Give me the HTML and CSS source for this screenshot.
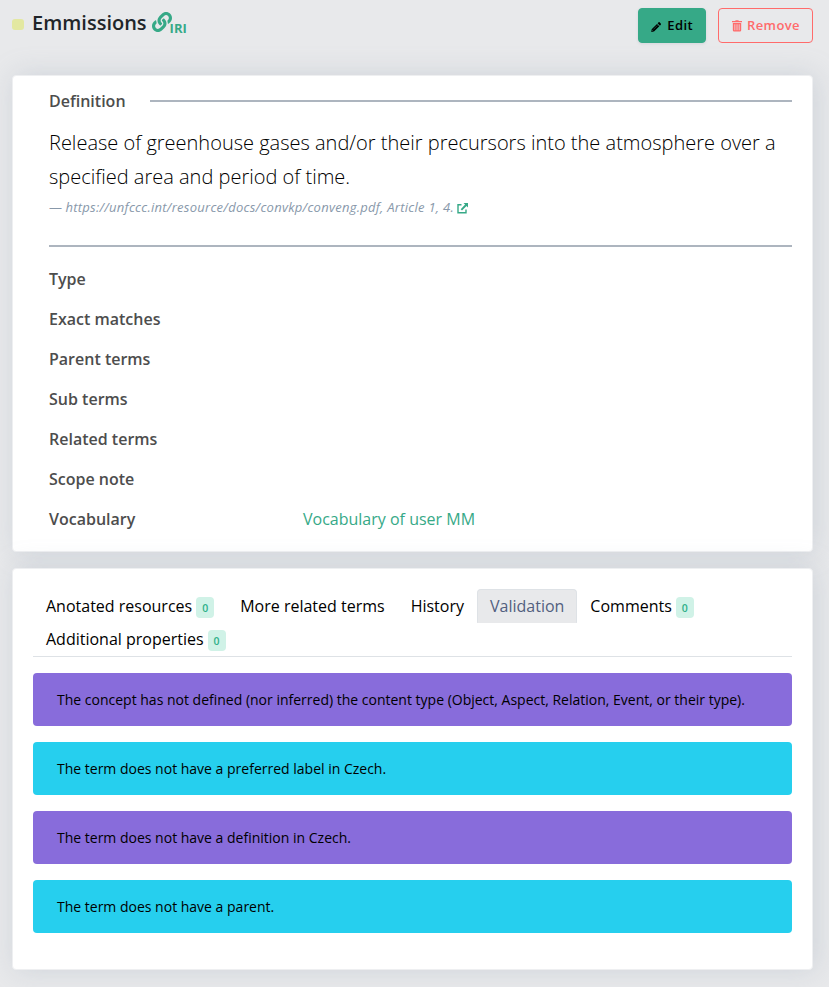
FILE: index.html
```html
<!DOCTYPE html>
<html lang="en">
<head>
<meta charset="utf-8">
<title>Emmissions</title>
<link rel="stylesheet" href="styles.css">
</head>
<body>
<header class="header">
  <span class="dot"></span>
  <h1>Emmissions</h1>
  <a class="iri"><svg class="link-icon" viewBox="0 0 512 512"><path d="M326.612 185.391c59.747 59.809 58.927 155.698.36 214.59-.11.12-.24.25-.36.37l-67.2 67.2c-59.27 59.27-155.699 59.262-214.96 0-59.27-59.26-59.27-155.7 0-214.96l37.106-37.106c9.84-9.84 26.786-3.3 27.294 10.606.648 17.722 3.826 35.527 9.69 52.721 1.986 5.822.567 12.262-3.783 16.612l-13.087 13.087c-28.026 28.026-28.905 73.66-1.155 101.96 28.024 28.579 74.086 28.749 102.325.51l67.2-67.19c28.191-28.191 28.073-73.757 0-101.83-3.701-3.694-7.429-6.564-10.341-8.569a16.037 16.037 0 0 1-6.947-12.606c-.396-10.567 3.348-21.456 11.698-29.806l21.054-21.055c5.521-5.521 14.182-6.199 20.584-1.731a152.482 152.482 0 0 1 20.522 17.197zM467.547 44.449c-59.261-59.262-155.69-59.27-214.96 0l-67.2 67.2c-.12.12-.25.25-.36.37-58.566 58.892-59.387 154.781.36 214.59a152.454 152.454 0 0 0 20.521 17.196c6.402 4.468 15.064 3.789 20.584-1.731l21.054-21.055c8.35-8.35 12.094-19.239 11.698-29.806a16.037 16.037 0 0 0-6.947-12.606c-2.912-2.005-6.64-4.875-10.341-8.569-28.073-28.073-28.191-73.639 0-101.83l67.2-67.19c28.239-28.239 74.3-28.069 102.325.51 27.75 28.3 26.872 73.934-1.155 101.96l-13.087 13.087c-4.35 4.35-5.769 10.79-3.783 16.612 5.864 17.194 9.042 34.999 9.69 52.721.509 13.906 17.454 20.446 27.294 10.606l37.106-37.106c59.271-59.259 59.271-155.699.001-214.959z"/></svg><span>IRI</span></a>
  <div class="actions">
    <button class="btn edit"><svg viewBox="0 0 12 12"><path d="M.3 11.8.8 8.6 7 2.4l2.7 2.7-6.2 6.2zM7.7 1.7 8.9.5q.5-.5 1.1 0l1.6 1.6q.5.6 0 1.1l-1.2 1.2z"/><path d="m2.7 8.9 4.8-4.8M1.2 9.5l1.4 1.4" stroke="#36a987" stroke-width=".5"/></svg><span>Edit</span></button>
    <button class="btn remove"><svg viewBox="0 0 12 14"><path fill-rule="evenodd" d="M0 1h3.7L4.5 0h3l.8 1H12v1.5H0zM1 3.5h10V12q0 1.5-1.5 1.5h-7Q1 13.500 1 12zM3 5v7h.9V5zm2.550 0v7h.9V5zm2.550 0v7H9V5z"/></svg><span>Remove</span></button>
  </div>
</header>
<main>
  <section class="card detail">
    <div class="legend"><h2>Definition</h2><span class="rule"></span></div>
    <p class="definition">Release of greenhouse gases and/or their precursors into the atmosphere over a specified area and period of time.</p>
    <p class="source">— <i>https://unfccc.int/resource/docs/convkp/conveng.pdf, Article 1, 4.</i><svg viewBox="0 0 11 11"><path d="M4.500 1.800H1v8h8V6.500" fill="none" stroke="currentColor" stroke-width="1.400"/><path d="M6.500 0H11v4.500L9.500 3 5 7.500 3.700 6.200l4.400-4.600z"/></svg></p>
    <div class="rule closing"></div>
    <dl class="attributes">
      <dt>Type</dt><dd></dd>
      <dt>Exact matches</dt><dd></dd>
      <dt>Parent terms</dt><dd></dd>
      <dt>Sub terms</dt><dd></dd>
      <dt>Related terms</dt><dd></dd>
      <dt>Scope note</dt><dd></dd>
      <dt>Vocabulary</dt><dd>Vocabulary of user MM</dd>
    </dl>
  </section>
  <section class="card validation">
    <nav class="tabs">
      <a>Anotated resources <span class="badge">0</span></a>
      <a>More related terms</a>
      <a>History</a>
      <a class="active">Validation</a>
      <a>Comments <span class="badge">0</span></a>
      <a>Additional properties <span class="badge">0</span></a>
    </nav>
    <div class="alert purple">The concept has not defined (nor inferred) the content type (Object, Aspect, Relation, Event, or their type).</div>
    <div class="alert cyan">The term does not have a preferred label in Czech.</div>
    <div class="alert purple">The term does not have a definition in Czech.</div>
    <div class="alert cyan">The term does not have a parent.</div>
  </section>
</main>
</body>
</html>
```
FILE: styles.css
```css
* { box-sizing: border-box; }
body {
  margin: 0;
  height: 987px;
  overflow: hidden;
  padding: 8px 16px 0 12px;
  background: #e8e9eb;
  color: #000;
  font: 16px/24px "Open Sans", sans-serif;
}
h1, h2, p, dl, dd { margin: 0; }
svg { fill: currentColor; }
.header { display: flex; align-items: flex-start; height: 67px; }
.dot { width: 12px; height: 11px; margin: 11px 8px 0 0; border-radius: 3px; background: #e3e8a1; }
h1 { font-size: 20px; font-weight: 600; line-height: 30px; color: #212529; }
.iri { display: flex; margin-left: 5px; color: #36a987; font-size: 13px; font-weight: 700; }
.link-icon { width: 20px; height: 20px; margin-top: 4px; }
.iri span { margin: 8px 0 0 -2px; }
.actions { display: flex; gap: 12px; margin-left: auto; }
.btn {
  display: flex;
  align-items: center;
  height: 35px;
  padding: 0 12px;
  border: 1px solid #36a987;
  border-radius: 4px;
  font: 600 13px/20px "Open Sans", sans-serif;
  letter-spacing: .4px;
}
.btn span { margin-bottom: 2px; }
.edit { width: 68px; background: #36a987; color: #000; box-shadow: 0 1px 3px rgba(50, 50, 93, .1); }
.edit svg { width: 12px; height: 12px; margin: 2px 6px 0 0; }
.remove { width: 95px; background: transparent; border-color: #ff6b6b; color: #ff6b6b; }
.remove svg { width: 12px; height: 14px; margin: 1px 5px 0 1px; }
.card {
  border: 1px solid #eeeff1;
  border-radius: 4px;
  background: #fff;
  box-shadow: 3px 0 28px rgba(136, 152, 170, .27);
}
.detail { height: 477px; padding: 13px 20px 0 36px; margin-bottom: 16px; }
.legend { display: flex; align-items: center; gap: 24px; }
.legend h2, .attributes dt { font-size: 16px; line-height: 24px; font-weight: 600; color: #4d4d4d; }
.rule { flex: 1; height: 2px; background: #adb5bf; }
.definition { margin-top: 13px; font-size: 20px; line-height: 34px; font-weight: 300; }
.source { height: 20px; margin-top: 3px; color: #8898aa; font-size: 13px; line-height: 20px; }
.source i { letter-spacing: .27px; }
.source svg { width: 11px; height: 11px; margin-left: 3px; vertical-align: -2px; color: #36a987; }
.closing { margin: 28px 0 12px; }
.attributes { display: grid; grid-template-columns: 254px 1fr; grid-auto-rows: 40px; align-items: center; }
.attributes dd { color: #36a987; }
.validation { height: 402px; padding: 20px; }
.tabs { display: flex; flex-wrap: wrap; align-content: flex-start; height: 68px; margin-bottom: 16px; border-bottom: 1px solid #dee2e6; }
.tabs a { display: flex; gap: 4px; height: 34px; padding: 4px 12px; border: 1px solid transparent; margin-bottom: -1px; }
.tabs .active { background: #e8e9eb; border-color: #dee2e6; border-bottom-color: #e8e9eb; border-radius: 4px 4px 0 0; color: #525f7f; }
.badge { width: 18px; height: 21px; margin-top: 3px; border-radius: 4px; background: #d0f2e7; color: #2fb089; font-size: 10.5px; line-height: 22px; font-weight: 600; text-align: center; }
.alert { height: 53px; padding: 16px 24px; margin-bottom: 16px; border-radius: 4px; font-size: 14px; line-height: 21px; }
.purple { background: #886cdb; }
.cyan { background: #26cfee; }
```
